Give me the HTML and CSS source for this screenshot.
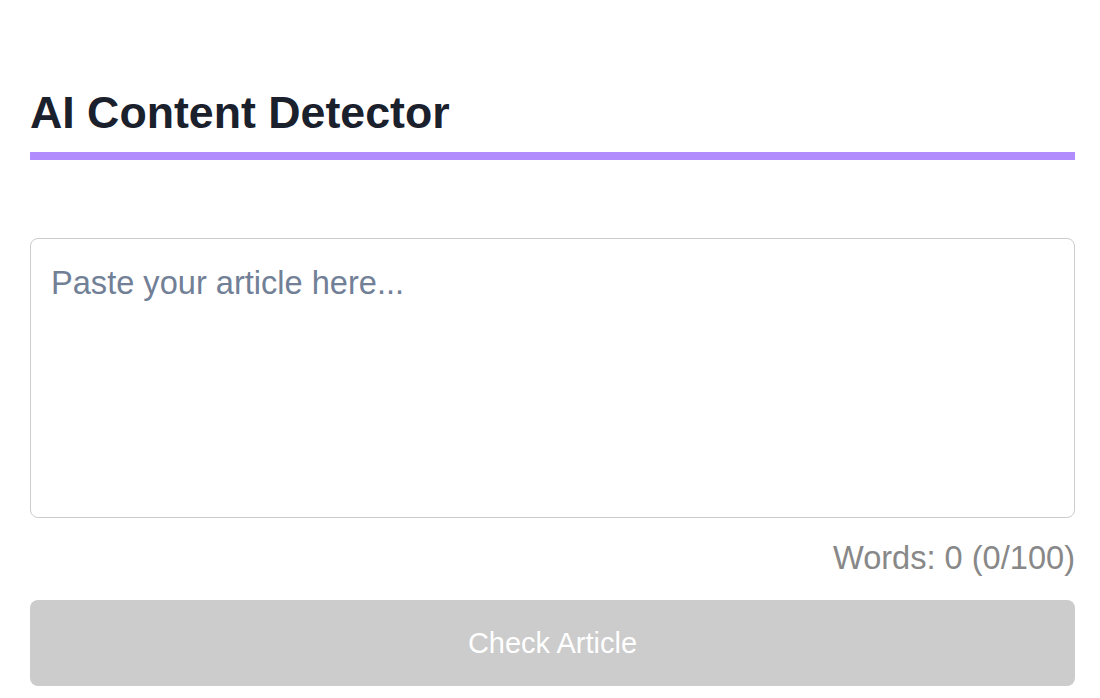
FILE: index.html
```html
<!DOCTYPE html>
<html lang="en">
<head>
<meta charset="utf-8">
<title>AI Content Detector</title>
<link rel="stylesheet" href="styles.css">
</head>
<body>
<main class="app">
  <h1 class="title">AI Content Detector</h1>
  <textarea class="article-input" placeholder="Paste your article here..."></textarea>
  <div class="word-count">Words: 0 (0/100)</div>
  <button class="check-btn" disabled>Check Article</button>
</main>
</body>
</html>
```
FILE: styles.css
```css
html, body {
  margin: 0;
  padding: 0;
  background: #ffffff;
}
body {
  font-family: "Liberation Sans", Arial, Helvetica, sans-serif;
}
.app {
  display: flex;
  flex-direction: column;
  padding: 87px 25px 0 30px;
}
.title {
  margin: 0;
  font-size: 44.7px;
  line-height: 52px;
  font-weight: 700;
  color: #1a202c;
  padding-bottom: 13px;
  border-bottom: 8px solid #b18cfc;
}
.article-input {
  box-sizing: border-box;
  margin-top: 78px;
  height: 280px;
  width: 100%;
  padding: 20px 20px;
  border: 1px solid #cccccc;
  border-radius: 8px;
  font-family: "Liberation Sans", Arial, sans-serif;
  font-size: 32.6px;
  line-height: 1.5;
  color: #1a202c;
  resize: none;
  outline: none;
}
.article-input::placeholder {
  color: #718096;
}
.word-count {
  margin-top: 21px;
  text-align: right;
  font-size: 32.6px;
  line-height: 37px;
  color: #888888;
}
.check-btn {
  margin-top: 24px;
  height: 86px;
  width: 100%;
  border: none;
  border-radius: 8px;
  background: #cccccc;
  color: #ffffff;
  font-family: "Liberation Sans", Arial, sans-serif;
  font-size: 29px;
}
```
